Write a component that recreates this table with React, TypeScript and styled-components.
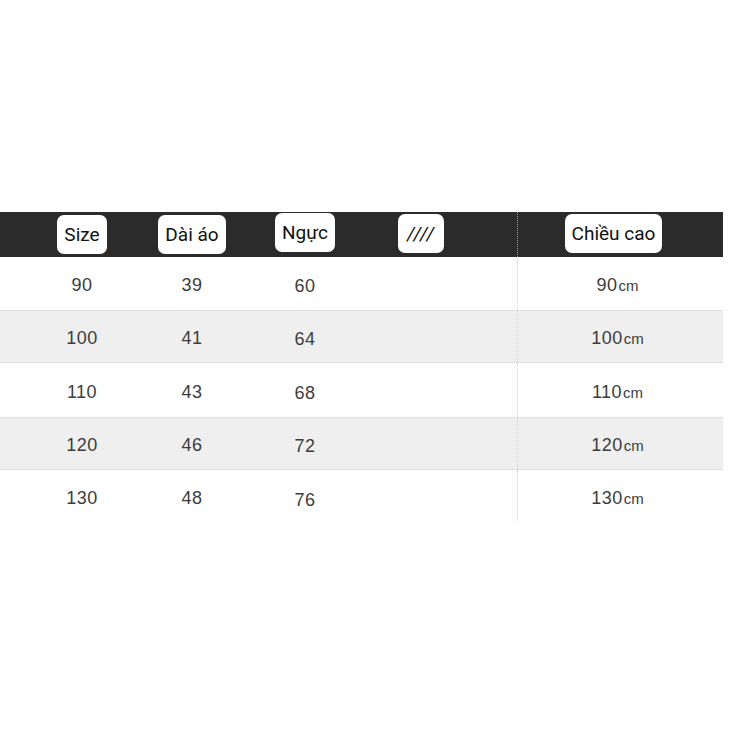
import React from "react";
import styled, { createGlobalStyle } from "styled-components";

const Global = createGlobalStyle`
  html, body { margin: 0; padding: 0; background: #ffffff; }
  body { font-family: "Liberation Sans", Arial, sans-serif; }
`;

const Page = styled.div`
  width: 732px;
  height: 732px;
  padding-top: 212px;
  box-sizing: border-box;
  background: #fff;
`;

const Table = styled.div`
  width: 723px;
  display: flex;
  flex-direction: column;
`;

const cols = "27px 110px 110px 116px 116px 38px 206px";

const HeaderRow = styled.div`
  display: grid;
  grid-template-columns: ${cols};
  height: 45px;
  background: #2b2b2b;
`;

const HeadCell = styled.div<{ $divider?: boolean }>`
  display: flex;
  justify-content: center;
  align-items: flex-start;
  border-left: ${(p) => (p.$divider ? "1px dotted #9a9a9a" : "none")};
  padding-right: ${(p) => (p.$divider ? "14px" : "0")};
`;

const Pill = styled.div<{ $top?: number }>`
  margin-top: ${(p) => p.$top ?? 3}px;
  height: 39px;
  padding: 0 7px;
  border-radius: 7px;
  background: #ffffff;
  color: #111;
  font-family: Roboto, "Noto Sans", sans-serif;
  font-size: 19px;
  display: flex;
  align-items: center;
  justify-content: center;
  box-sizing: border-box;
`;

const Slashes = styled(Pill)`
  font-style: italic;
  letter-spacing: 1px;
  padding: 0 9px;
`;

const Row = styled.div<{ $shade?: boolean; $h: number }>`
  display: grid;
  grid-template-columns: ${cols};
  height: ${(p) => p.$h}px;
  box-sizing: border-box;
  background: ${(p) => (p.$shade ? "#efefef" : "#ffffff")};
  border-top: ${(p) => (p.$shade ? "1px dotted #d2d2d2" : "none")};
  border-bottom: ${(p) => (p.$shade ? "1px dotted #d2d2d2" : "none")};
`;

const Cell = styled.div<{ $dy?: number }>`
  display: flex;
  justify-content: center;
  align-items: center;
  color: #3c3c3c;
  font-family: "Liberation Sans", Arial, sans-serif;
  font-size: 18px;
  padding-top: ${(p) => 4 + (p.$dy ?? 0) * 2}px;
  letter-spacing: 0.5px;
`;

const DividerCell = styled(Cell)`
  border-left: 1px dotted #d2d2d2;
  padding-right: 6px;
`;

const Unit = styled.span`
  font-size: 15px;
  letter-spacing: 0;
  margin-left: 1px;
`;

const data = [
  { s: "90", d: "39", n: "60", h: "90", dy: [0, 0, 1] },
  { s: "100", d: "41", n: "64", h: "100", dy: [0, 0, 1] },
  { s: "110", d: "43", n: "68", h: "110", dy: [0, 0, 1] },
  { s: "120", d: "46", n: "72", h: "120", dy: [0, 0, 1] },
  { s: "130", d: "48", n: "76", h: "130", dy: [0, 0, 2] },
];

const heights = [53, 53, 54, 53, 52];

export default function App() {
  return (
    <Page>
      <Global />
      <Table>
        <HeaderRow>
          <div />
          <HeadCell>
            <Pill>Size</Pill>
          </HeadCell>
          <HeadCell>
            <Pill>Dài áo</Pill>
          </HeadCell>
          <HeadCell>
            <Pill $top={1}>Ngực</Pill>
          </HeadCell>
          <HeadCell>
            <Slashes $top={2}>////</Slashes>
          </HeadCell>
          <div />
          <HeadCell $divider>
            <Pill $top={2}>Chiều cao</Pill>
          </HeadCell>
        </HeaderRow>
        {data.map((r, i) => (
          <Row key={r.s} $shade={i % 2 === 1} $h={heights[i]}>
            <div />
            <Cell $dy={r.dy[0]}>{r.s}</Cell>
            <Cell $dy={r.dy[1]}>{r.d}</Cell>
            <Cell $dy={r.dy[2]}>{r.n}</Cell>
            <Cell />
            <div />
            <DividerCell>
              {r.h}
              <Unit>cm</Unit>
            </DividerCell>
          </Row>
        ))}
      </Table>
    </Page>
  );
}
